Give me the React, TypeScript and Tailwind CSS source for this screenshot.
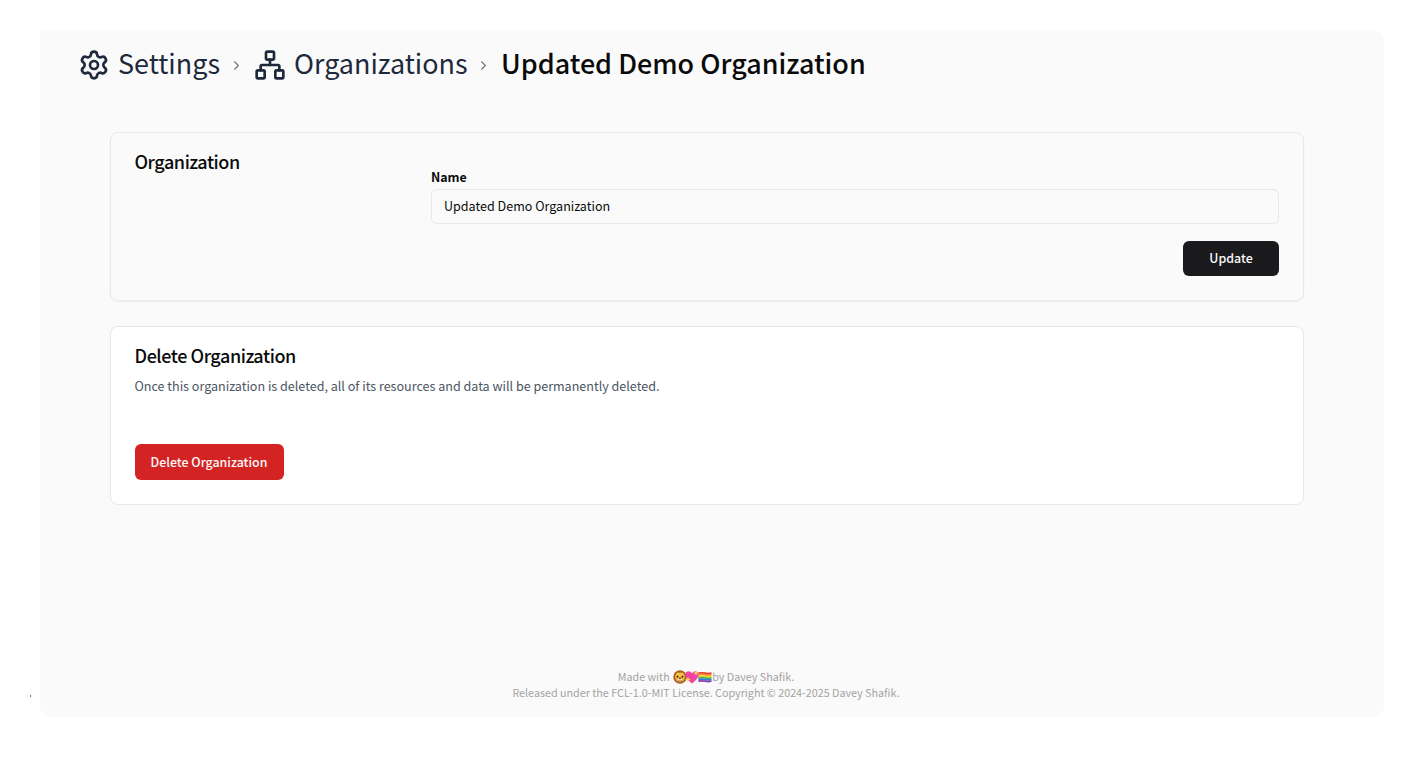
import { ChevronRight, Network, Settings } from "lucide-react";

function Lion() {
  return (
    <svg viewBox="0 0 28 28" className="h-[14px] w-[14px]">
      <circle cx="14" cy="14" r="13.5" fill="#a9601f" />
      <ellipse cx="14" cy="14.5" rx="10" ry="9.5" fill="#f0ac32" />
      <path d="M5 11 8 5l6 2 6-2 3 6-5 2h-8z" fill="#f8c64c" />
      <circle cx="9" cy="13" r="1.8" fill="#3c2410" />
      <circle cx="19" cy="13" r="1.8" fill="#3c2410" />
      <ellipse cx="14" cy="20" rx="5" ry="3.5" fill="#fff0c4" />
      <path d="M11 15.5h6l-3 3.5z" fill="#3c2410" />
      <path d="M10 21q4 3 8 0" stroke="#5f3511" strokeWidth="1.5" fill="none" />
    </svg>
  );
}

function SparklingHeart() {
  return (
    <svg viewBox="0 0 28 28" className="-ml-[1.5px] h-[14px] w-[14px]">
      <path d="M14 27C5 20 1 15 1 9c0-8 10-9 13-2 3-7 13-6 13 2 0 6-4 11-13 18z" fill="#f044a5" />
      <path d="M22 0l1.500 4.500L28 6l-4.500 1.500L22 12l-1.500-4.500L16 6l4.500-1.500z" fill="#ffd84d" />
      <path d="M6 13l1.500 4.500L12 19l-4.500 1.500L6 25l-1.500-4.500L0 19l4.500-1.500z" fill="#ffd84d" />
    </svg>
  );
}

function RainbowFlag() {
  const stripes = ["#e8382f", "#f98b28", "#fbd438", "#4cb648", "#3478e0", "#8e3fb5"];
  return (
    <svg viewBox="0 0 28 28" className="-ml-[1px] h-[14px] w-[14px]">
      {stripes.map((color, i) => (
        <path key={color} d={`M1 ${4.5 + i * 3.2}q6.500-1.500 13 0t13 0v3.600q-6.500 1.500-13 0t-13 0z`} fill={color} />
      ))}
      <path d="M1 4v20" stroke="#8a8f98" strokeWidth="1" />
    </svg>
  );
}

export default function App() {
  return (
    <div className="flex h-[759px] w-[1426px] bg-white pt-[30px] font-['Noto_Sans_CJK_SC',sans-serif] text-[#0a0a0a]">
      <div className="flex w-10 shrink-0 items-start pl-[30px] pt-[665px]">
        <span className="h-[2px] w-px bg-[#777]" />
      </div>
      <main className="flex h-[687px] w-[1344px] flex-col rounded-xl rounded-tl-none bg-[#fafafa]">
        <nav className="flex h-[70px] items-center pl-[38px] text-[26.93px] leading-9 text-[#1e293b]">
          <Settings className="size-8" strokeWidth={2} />
          <span className="ml-2 w-[102px] pb-[5px] whitespace-nowrap">Settings</span>
          <ChevronRight className="ml-[9px] size-[15px] text-[#737373]" strokeWidth={1.8} />
          <Network className="ml-[10px] size-8" strokeWidth={2} />
          <span className="ml-2 w-[173px] pb-[5px] whitespace-nowrap">Organizations</span>
          <ChevronRight className="ml-[9px] size-[15px] text-[#737373]" strokeWidth={1.8} />
          <span className="ml-[10px] pb-[5px] whitespace-nowrap font-medium text-[#0a0a0a]">Updated Demo Organization</span>
        </nav>

        <section className="ml-[69.5px] mt-[31.5px] flex h-[169.5px] w-[1194.5px] rounded-lg border border-[#e8e8e8] px-6 shadow-xs">
          <h2 className="mt-[14px] w-[296.5px] shrink-0 text-[18px] leading-7 font-medium tracking-tight">Organization</h2>
          <div className="flex grow flex-col">
            <label className="mt-[34px] text-[12.4px] leading-5 font-bold">Name</label>
            <input
              className="mt-[2px] h-[35.5px] w-full shrink-0 rounded-md border border-[#e8e8e8] bg-transparent px-3 pb-[2px] text-[12.55px]"
              defaultValue="Updated Demo Organization"
            />
            <button className="mt-[17px] h-[35px] w-24 shrink-0 self-end rounded-md bg-[#1a1a1c] pb-px text-[12.4px] font-medium text-[#fafafa]">
              Update
            </button>
          </div>
        </section>

        <section className="ml-[69.5px] mt-[24.5px] flex h-[179.5px] w-[1194.5px] flex-col rounded-lg border border-[#e8e8e8] bg-white px-6">
          <h2 className="mt-[14px] text-[18px] leading-7 font-medium tracking-tight">Delete Organization</h2>
          <p className="mt-[7px] text-[12.55px] leading-5 text-[#4b5563]">
            Once this organization is deleted, all of its resources and data will be permanently deleted.
          </p>
          <button className="mt-[48.5px] h-9 w-[149px] rounded-md bg-[#d42323] text-[12.4px] font-medium text-[#fafafa]">
            Delete Organization
          </button>
        </section>

        <footer className="mt-auto flex flex-col items-center pr-[12px] pb-4 text-[10.75px] leading-4 text-[#a3a3a3]">
          <div className="flex items-center">
            <span className="mr-[3px]">Made with</span>
            <Lion />
            <SparklingHeart />
            <RainbowFlag />
            <span>by Davey Shafik.</span>
          </div>
          <div>Released under the FCL-1.0-MIT License. Copyright © 2024-2025 Davey Shafik.</div>
        </footer>
      </main>
    </div>
  );
}
